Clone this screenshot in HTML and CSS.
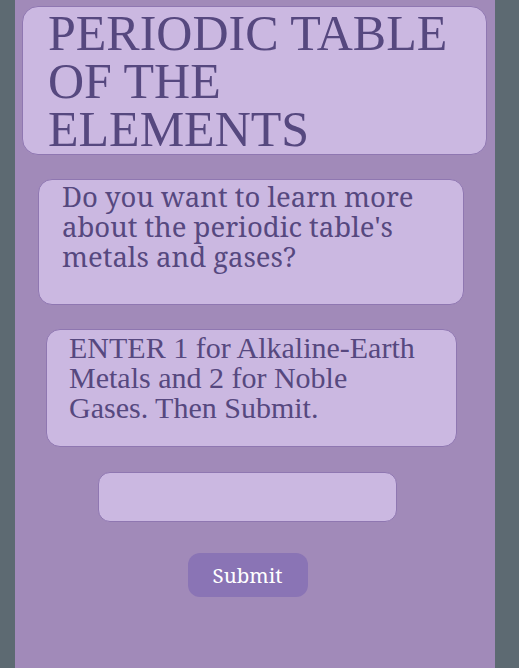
FILE: index.html
```html
<!DOCTYPE html>
<html lang="en">

<head>
  <meta charset="UTF-8">
  <meta name="viewport" content="width=device-width, initial-scale=1.0">
  <title>Periodic Table of the Elements</title>

  <link rel="stylesheet" href="styles.css">
</head>

<body>

  <div class="page">

    <!-- Heading -->
    <h1 class="title">PERIODIC TABLE OF THE ELEMENTS</h1>

    <!-- Question -->
    <p class="question">Do you want to learn more about the periodic table's metals and gases?</p>

    <!-- Instructions -->
    <p class="instructions">ENTER 1 for Alkaline-Earth Metals and 2 for Noble Gases. Then Submit.</p>

    <!-- Form -->
    <form class="answer-form" onsubmit="return false;">
      <input type="text" class="answer">
      <button type="submit" class="submit">Submit</button>
    </form>

  </div>

</body>

</html>
```

FILE: styles.css
```css
/* Basic page setup */
body {
  margin: 0;
  background-color: #5d6a72;
}

.page {
  width: 480px;
  min-height: 100vh;
  margin-left: 15px;
  padding-top: 6px;
  box-sizing: border-box;
  background-color: #a18ab9;
  color: #56487f;
  display: flex;
  flex-direction: column;
  align-items: flex-start;
}

/* Boxes share the same light purple card look */
.title, .question, .instructions, .answer {
  background-color: #cbb8e1;
  border: 1px solid #8f77b1;
  box-sizing: border-box;
}

.title {
  width: 465px;
  height: 149px;
  margin: 0 0 0 7px;
  padding: 2px 20px 0 25px;
  border-radius: 16px;
  font-family: "Liberation Serif", serif;
  font-weight: normal;
  font-size: 50px;
  line-height: 48px;
}

.question {
  width: 426px;
  height: 126px;
  margin: 24px 0 0 23px;
  padding: 2px 20px 0 23px;
  border-radius: 14px;
  font-family: "Noto Serif", serif;
  font-size: 27.5px;
  line-height: 30px;
}

.instructions {
  width: 411px;
  height: 118px;
  margin: 24px 0 0 31px;
  padding: 3px 30px 0 22px;
  border-radius: 14px;
  font-family: "Liberation Serif", serif;
  font-size: 30px;
  line-height: 30px;
}

/* Answer form */
.answer-form {
  display: flex;
  flex-direction: column;
  align-items: center;
  margin: 25px 0 0 83px;
}

.answer {
  width: 299px;
  height: 50px;
  border-radius: 12px;
  outline: none;
}

.submit {
  margin-top: 31px;
  width: 120px;
  height: 44px;
  border: none;
  border-radius: 12px;
  background-color: #8a74b5;
  color: #ffffff;
  font-family: "Noto Serif", serif;
  font-size: 20.5px;
}
```
